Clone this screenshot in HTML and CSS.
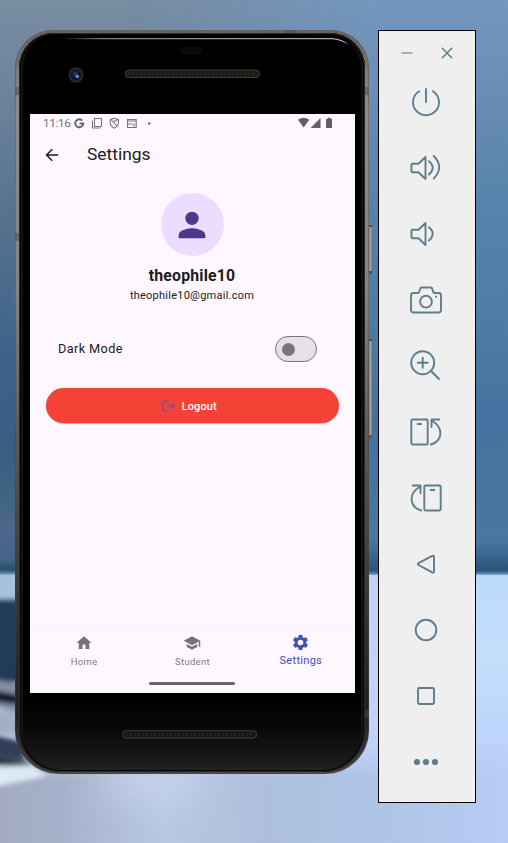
FILE: index.html
```html
<!DOCTYPE html>
<html lang="en">
<head>
<meta charset="utf-8">
<title>Settings</title>
<link rel="stylesheet" href="styles.css">
</head>
<body>
<svg class="wallpaper" viewBox="0 0 508 843" preserveAspectRatio="none" aria-hidden="true">
  <defs>
    <linearGradient id="skyL" x1="0" y1="0" x2="0" y2="1">
      <stop offset="0" stop-color="#788ca2"/><stop offset=".14" stop-color="#6f859d"/><stop offset=".38" stop-color="#56728f"/>
      <stop offset=".62" stop-color="#3d6288"/><stop offset=".8" stop-color="#3a5d82"/><stop offset=".87" stop-color="#3f657f"/>
      <stop offset=".92" stop-color="#4f668b"/><stop offset=".975" stop-color="#3f6585"/><stop offset="1" stop-color="#173f5e"/>
    </linearGradient>
    <linearGradient id="skyR" x1="0" y1="0" x2="0" y2="1">
      <stop offset="0" stop-color="#7397be"/><stop offset=".15" stop-color="#6c8db5"/><stop offset=".36" stop-color="#5583ab"/>
      <stop offset=".6" stop-color="#4b7ba3"/><stop offset=".72" stop-color="#4472a0"/><stop offset=".94" stop-color="#4a77a0"/><stop offset="1" stop-color="#244d77"/>
    </linearGradient>
    <linearGradient id="fade" x1="0" y1="0" x2="1" y2="0"><stop offset=".25" stop-color="#000"/><stop offset=".75" stop-color="#fff"/></linearGradient>
    <mask id="right"><rect width="508" height="843" fill="url(#fade)"/></mask>
    <linearGradient id="fadeDown" x1="0" y1="0" x2="0" y2="1"><stop offset="0" stop-color="#000"/><stop offset=".35" stop-color="#fff"/></linearGradient>
    <mask id="lower"><rect y="745" width="508" height="98" fill="url(#fadeDown)"/></mask>
    <linearGradient id="floorR" x1="0" y1="0" x2="0" y2="1">
      <stop offset="0" stop-color="#bddafa"/><stop offset=".3" stop-color="#c3dffb"/><stop offset=".6" stop-color="#bcd2fb"/><stop offset="1" stop-color="#b4cbf3"/>
    </linearGradient>
    <linearGradient id="floorB" x1="0" y1="0" x2="1" y2="0">
      <stop offset="0" stop-color="#a2abc1"/><stop offset=".12" stop-color="#a6b2cb"/><stop offset=".32" stop-color="#b8c8e3"/>
      <stop offset=".52" stop-color="#adbfdc"/><stop offset=".76" stop-color="#aec5e7"/><stop offset="1" stop-color="#b6ccf5"/>
    </linearGradient>
    <filter id="soft" x="-20%" y="-20%" width="140%" height="140%"><feGaussianBlur stdDeviation="2.500"/></filter>
    <filter id="edge" x="-5%" y="-5%" width="110%" height="110%"><feGaussianBlur stdDeviation="2"/></filter>
    <filter id="haze" x="-60%" y="-200%" width="220%" height="500%"><feGaussianBlur stdDeviation="18"/></filter>
  </defs>
  <rect width="508" height="575" fill="url(#skyL)"/>
  <rect width="508" height="575" fill="url(#skyR)" mask="url(#right)"/>
  <g filter="url(#edge)">
    <rect x="-20" y="574" width="548" height="290" fill="url(#floorR)"/>
    <rect x="-20" y="573" width="80" height="40" fill="#a8c1df"/>
    <rect x="360" y="574" width="24" height="200" fill="#bed2fa"/>
  </g>
  <rect y="745" width="508" height="98" fill="url(#floorB)" mask="url(#lower)"/>
  <ellipse cx="155" cy="780" rx="50" ry="16" fill="#c8d5f0" filter="url(#haze)"/>
  <g filter="url(#soft)">
    <rect x="-20" y="600" width="60" height="82" fill="#203a57"/>
    <path d="M-10 680 40 685V720L-10 705Z" fill="#8590a9"/>
    <path d="M-10 689 40 699V708L-10 701Z" fill="#15192a"/>
    <path d="M-10 708 40 718V740L-10 732Z" fill="#a5aec4"/>
    <path d="M-10 734 24 742V760L-10 756Z" fill="#303c57"/>
    <path d="M-10 756 30 762 34 770-10 764Z" fill="#203241"/>
    <path d="M-10 767 30 765 48 776-10 788Z" fill="#dceaf3"/>
  </g>
</svg>
<main class="desktop">
  <section class="phone">
    <i class="key key-power"></i><i class="key key-volume"></i>
    <i class="band band-lt"></i><i class="band band-lm"></i><i class="band band-rt"></i><i class="band band-rb"></i>
    <i class="band band-top"></i><i class="band band-bl"></i><i class="band band-br"></i>
    <div class="glass">
      <header class="bezel-top">
        <svg width="346" height="81" viewBox="19 33 346 81">
          <defs><linearGradient id="shine" gradientUnits="userSpaceOnUse" x1="60" y1="0" x2="350" y2="0"><stop offset="0" stop-color="#73858a" stop-opacity="0"/><stop offset=".15" stop-color="#73858a"/><stop offset="1" stop-color="#a6b3b8"/></linearGradient></defs>
          <path d="M62 38H332Q343 38.500 350 45.500 343 40.500 332 39.300H62Z" fill="url(#shine)"/>
          <rect x="180" y="47" width="23" height="8" rx="4" fill="#08090e"/>
          <circle cx="76" cy="75" r="7.700" fill="#25262a"/><circle cx="76" cy="75" r="5" fill="#10121f"/>
          <circle cx="75.300" cy="74" r="2.700" fill="#202d66"/><circle cx="77.300" cy="76.500" r="1.700" fill="#7087e0"/>
          <rect x="125" y="70" width="134.500" height="7.500" rx="3.700" fill="#1c1b18" stroke="#3f3f3c" stroke-width="1"/>
          <path d="M128 73.700H257" stroke="#26241f" stroke-width="3" stroke-dasharray="2 2"/>
        </svg>
      </header>
      <div class="screen">
        <div class="status">
          <span class="clock">11:16</span>
          <svg width="82" height="14" viewBox="72 116 82 14" fill="none" stroke="#7a767c" stroke-width="1.100">
            <path d="M82.300 120.600A4 4 0 1 0 83.300 123.500H79.500" stroke="#68646b" stroke-width="1.900"/>
            <path d="M94.500 118.500H101.500V126.500H94.500ZM92.500 120.500V128H100.500"/>
            <path d="M114.300 118.200 118.500 119.700V122.500Q118 126.500 114.300 128.200 110.600 126.500 110.200 122.500V119.700ZM111 119.500 117.500 126.500M113 122.500Q115 120.200 117.500 120"/>
            <path d="M127.500 119.500H136.200V127.500H127.500ZM127.500 121H136.200M128 124H132.800M134 123.500V126.500"/>
            <circle cx="149.200" cy="123.500" r="1.300" fill="#6c686e" stroke="none"/>
          </svg>
          <svg class="signals" width="36" height="14" viewBox="297 116 36 14" fill="#626066">
            <path d="M298 119.800Q303.600 115.900 309.300 119.800L303.600 127.500Z"/><path d="M320.500 118V128H310.500Z"/><path d="M327 118.700H328V117.700H330.500V118.700H332V128H326V118.700Z"/>
          </svg>
        </div>
        <div class="appbar">
          <svg width="16" height="16" viewBox="0 0 16 16" fill="none" stroke="#1d1b20" stroke-width="1.500"><path d="M14.200 8H2.600M8.200 2.300 2.500 8l5.700 5.700"/></svg>
          <h1>Settings</h1>
        </div>
        <div class="profile">
          <div class="avatar"><svg width="40" height="40" viewBox="0 0 24 24" fill="#4f378b"><path d="M12 12a4 4 0 1 0 0-8 4 4 0 0 0 0 8Zm0 2c-2.700 0-8 1.340-8 4v2h16v-2c0-2.660-5.300-4-8-4Z"/></svg></div>
          <strong>theophile10</strong>
          <span class="email">theophile10@gmail.com</span>
        </div>
        <div class="mode"><span>Dark Mode</span><div class="switch"><i></i></div></div>
        <div class="logout">
          <svg width="13" height="12" viewBox="0 0 13 12" fill="none" stroke="#6750a4" stroke-width="1.200"><path d="M6.300 1H2.100Q1 1 1 2.100V9.900Q1 11 2.100 11H6.300M4.500 6H12M9.700 3.500 12.200 6 9.700 8.500"/></svg>
          <span>Logout</span>
        </div>
        <nav>
          <div class="tab"><svg width="18" height="18" viewBox="0 0 24 24" fill="#757377"><path d="M10 20v-6h4v6h5v-8h3L12 3 2 12h3v8z"/></svg><span>Home</span></div>
          <div class="tab"><svg width="18" height="18" viewBox="0 0 24 24" fill="#757377"><path d="M5 13.180v4L12 21l7-3.820v-4L12 17l-7-3.820zM12 3 1 9l11 6 9-4.910V17h2V9L12 3z"/></svg><span>Student</span></div>
          <div class="tab active"><svg width="19" height="19" viewBox="0 0 24 24" fill="#3f51b5"><path d="M19.140 12.940c.04-.3.060-.610.060-.940 0-.320-.020-.640-.070-.940l2.030-1.580a.49.49 0 0 0 .12-.61l-1.920-3.320a.488.488 0 0 0-.59-.22l-2.390.96c-.5-.38-1.030-.7-1.620-.94l-.36-2.540a.484.484 0 0 0-.48-.41h-3.840c-.24 0-.43.17-.47.41l-.36 2.540c-.59.24-1.130.57-1.620.94l-2.390-.96c-.22-.08-.47 0-.59.22L2.740 8.870c-.12.21-.08.47.12.61l2.030 1.580c-.05.3-.09.63-.09.94s.02.64.07.94l-2.030 1.580a.49.49 0 0 0-.12.61l1.920 3.320c.12.22.37.29.59.22l2.390-.96c.5.38 1.030.7 1.620.94l.36 2.540c.05.24.24.41.48.41h3.840c.24 0 .44-.17.47-.41l.36-2.540c.59-.24 1.130-.56 1.620-.94l2.390.96c.22.08.47 0 .59-.22l1.920-3.320c.12-.22.07-.47-.12-.61l-2.010-1.580zM12 15.600A3.610 3.610 0 0 1 8.400 12c0-1.980 1.620-3.600 3.600-3.600s3.600 1.620 3.600 3.600-1.620 3.600-3.600 3.600z"/></svg><span>Settings</span></div>
        </nav>
        <div class="gesture"></div>
      </div>
      <footer class="bezel-bottom">
        <svg width="136" height="9" viewBox="0 0 136 9"><rect x=".7" y=".7" width="134" height="7.500" rx="3.700" fill="#191917" stroke="#3c3c39"/><path d="M4 4.500H132" stroke="#24221e" stroke-width="3" stroke-dasharray="2 2"/></svg>
      </footer>
    </div>
  </section>
  <aside class="toolbar">
    <div class="window-buttons">
      <svg width="12" height="12" viewBox="0 0 12 12"><path d="M1 6H11" class="minimise"/></svg>
      <svg width="12" height="12" viewBox="0 0 12 12"><path d="M1.300 1.300 10.700 10.700M10.700 1.300 1.300 10.700"/></svg>
    </div>
    <svg class="tool" viewBox="0 0 36 36"><path d="M11.200 7.200A13 13 0 1 0 24.800 7.200M18 5V18"/></svg>
    <svg class="tool" viewBox="0 0 36 36"><path d="M4.500 13.800H10.500L17.500 7V29L10.500 22.200H4.500Q3.500 22.200 3.500 21.200V14.800Q3.500 13.800 4.500 13.800ZM21 11.200Q28.500 17.500 21 24.500M25.800 6Q36.500 17 25.800 28.500"/></svg>
    <svg class="tool" viewBox="0 0 36 36"><path d="M4.500 13.800H10.500L17.500 7V29L10.500 22.200H4.500Q3.500 22.200 3.500 21.200V14.800Q3.500 13.800 4.500 13.800ZM21 11.200Q28.500 17.500 21 24.500"/></svg>
    <svg class="tool" viewBox="0 0 36 36"><path d="M5.500 11H9.500Q11 11 11.300 9.500L12 7Q12.300 5.500 13.800 5.500H22.500Q24 5.500 24.300 7L25 9.500Q25.300 11 26.800 11H30.500Q33 11 33 13.500V28Q33 30.500 30.500 30.500H5.500Q3 30.500 3 28V13.500Q3 11 5.500 11Z"/><circle cx="18" cy="19.700" r="5.900"/><circle cx="28" cy="14.700" r="1.100" class="solid"/></svg>
    <svg class="tool" viewBox="0 0 36 36"><circle cx="14.700" cy="14.700" r="11.500"/><path d="M23 23 31 31M9.700 14.700H19.700M14.700 9.700V19.700"/></svg>
    <svg class="tool" viewBox="0 0 36 36"><rect x="3.300" y="5.500" width="16.400" height="25" rx="1.200"/><path d="M9.700 10H13.200M22.800 30.500C34.500 27 36 14 24.500 7M31.300 5.500H23.500V13"/></svg>
    <svg class="tool" viewBox="0 0 36 36"><g transform="matrix(-1 0 0 1 36 0)"><rect x="3.300" y="5.500" width="16.400" height="25" rx="1.200"/><path d="M9.700 10H13.200M22.800 30.500C34.500 27 36 14 24.500 7M31.300 5.500H23.500V13"/></g></svg>
    <svg class="tool" viewBox="0 0 36 36"><path d="M10.500 17.200 24.200 9.900Q26 9.100 26 11V25.500Q26 27.200 24.200 26.400L10.500 19Q9.200 18.100 10.500 17.200Z"/></svg>
    <svg class="tool" viewBox="0 0 36 36"><circle cx="18" cy="18" r="10.300"/></svg>
    <svg class="tool" viewBox="0 0 36 36"><rect x="10" y="10" width="16" height="16" rx="1.200"/></svg>
    <svg class="tool" viewBox="0 0 36 36"><g class="solid"><circle cx="9" cy="18" r="3.100"/><circle cx="18" cy="18" r="3.100"/><circle cx="27" cy="18" r="3.100"/></g></svg>
  </aside>
</main>
</body>
</html>
```
FILE: styles.css
```css
* { box-sizing: border-box; }
body { margin: 0; width: 508px; height: 843px; overflow: hidden; font-family: Roboto, sans-serif; color: #1d1b20; background: #b6ccf5; }
svg { display: block; }
.wallpaper { position: absolute; inset: 0; width: 508px; height: 843px; }
.desktop { position: relative; display: flex; align-items: flex-start; gap: 9px; padding: 30px 0 0 15px; }

.phone { position: relative; width: 354px; height: 744px; padding: 3px 4px 2px; border-radius: 38px 38px 44px 44px; background: linear-gradient(#66625d, #8f8b87 10%, #858380 35%, #5a5958 55%, #3a3a3a 75%, #1f1f1f 92%, #4a4846 100%); box-shadow: inset 1px 0 0 #44444466, inset -1px 0 0 #44444466; }
.glass { height: 739px; border-radius: 35px 35px 42px 42px; background: linear-gradient(#000 0 90%, #080808 94%, #1d1d1d 99%, #262626); box-shadow: inset 0 0 0 1px #2a2a2a, inset 0 0 0 2px #050505, inset 3px 0 1px 1px #141414, inset -3px 0 1px 1px #141414; overflow: hidden; }
.bezel-top { height: 81px; }
.screen { display: flex; flex-direction: column; width: 325px; height: 579px; margin-left: 11px; background: #fef7ff; }
.bezel-bottom { display: flex; justify-content: center; height: 79px; padding: 37px 4px 0 0; }

.key { position: absolute; left: 354px; width: 3px; background: linear-gradient(90deg, #77736e, #aaa7a2, #77736e); border-top: 2px solid #4a4845; border-bottom: 3px solid #55524f; }
.key-power { top: 195px; height: 49px; }
.key-volume { top: 309px; height: 99px; }
.band { position: absolute; background: #4b4b4b88; width: 4px; height: 8px; }
.band-lt { left: 0; top: 57px; }
.band-lm { left: 0; top: 203px; }
.band-rt { right: 0; top: 57px; }
.band-rb { right: 0; top: 680px; }
.band-top { top: 0; left: 270px; width: 11px; height: 3px; }
.band-bl { bottom: 0; left: 57px; width: 11px; height: 2px; }
.band-br { bottom: 0; left: 286px; width: 11px; height: 2px; }

.status { display: flex; align-items: center; height: 19px; padding: 0 0 1px 13px; }
.clock { width: 29px; font-size: 11.800px; line-height: 18px; color: #77737a; letter-spacing: -.35px; white-space: nowrap; }
.signals { margin-left: auto; margin-right: 22px; }
.appbar { display: flex; align-items: center; gap: 27px; height: 44px; padding-left: 14px; }
h1 { margin: -2px 0 0; font-size: 17.400px; line-height: 24px; font-weight: 400; }
.profile { display: flex; flex-direction: column; align-items: center; padding-top: 16px; margin-right: 1px; }
.avatar { display: flex; align-items: center; justify-content: center; width: 63px; height: 63px; border-radius: 50%; background: #eaddff; margin-bottom: 10px; }
.profile strong { font-size: 15.800px; line-height: 20px; letter-spacing: .2px; }
.email { font-size: 11px; line-height: 16px; margin-top: 2px; letter-spacing: .24px; }
.mode { display: flex; align-items: center; justify-content: space-between; height: 26px; margin: 32px 38px 0 28px; font-size: 12.700px; letter-spacing: .4px; }
.mode span { margin-top: -2px; }
.switch { width: 42px; height: 26px; padding: 4.500px 5px; border: 1.600px solid #79747e; border-radius: 13px; background: #e6e0e9; }
.switch i { display: block; width: 13px; height: 13px; margin: 1px 0 0 1px; border-radius: 50%; background: #79747e; }
.logout { display: flex; align-items: center; justify-content: center; gap: 7px; height: 35px; margin: 26px 16px 0 15.500px; padding: 0 6px 0 0; border-radius: 18px; background: #f44336; color: #fff; font-size: 11px; font-weight: 500; letter-spacing: .1px; box-shadow: 0 1px 1px #0004; }
.logout span { margin-top: 1px; }
nav { display: grid; grid-template-columns: repeat(3, 1fr); height: 48px; margin-top: auto; border-top: 1px solid #f8f1f9; }
.tab { display: flex; flex-direction: column; align-items: center; padding-top: 6px; color: #7d7a80; font-size: 9.500px; line-height: 16px; letter-spacing: .3px; }
.tab span { margin: 2px 0 0; }
.tab.active { color: #3f51b5; font-size: 11px; }
.tab.active svg { margin-top: -1px; }
.tab.active span { margin-top: 1px; }
.gesture { width: 86px; height: 3px; margin: 7px auto 8px 119px; border-radius: 2px; background: #68646b; }

.toolbar { width: 98px; height: 773px; border: 1px solid #000; background: #efefef; }
.toolbar svg { fill: none; stroke: #607d8b; stroke-width: 1.900; stroke-linecap: round; stroke-linejoin: round; }
.toolbar .solid { fill: #607d8b; stroke: none; }
.window-buttons { display: flex; gap: 28px; height: 53px; padding: 16px 0 0 22px; }
.toolbar .window-buttons svg { stroke-width: 1.500; }
.minimise { stroke: #84a0ad; }
.tool { width: 36px; height: 36px; margin: 0 0 30px 29px; }
```
